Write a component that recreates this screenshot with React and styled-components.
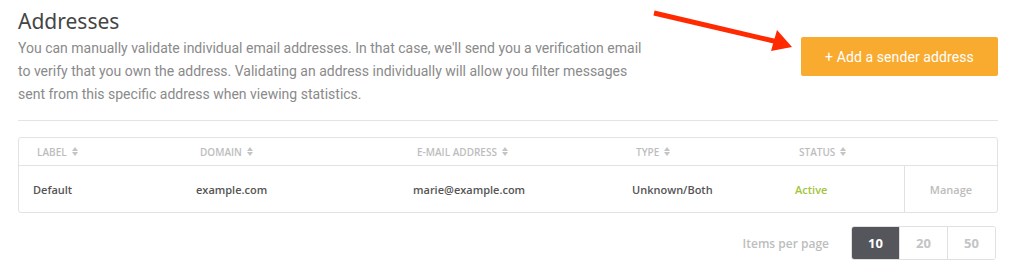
import React from 'react';
import styled, { createGlobalStyle } from 'styled-components';

const GlobalStyle = createGlobalStyle`
  html, body {
    margin: 0;
    padding: 0;
    background: #ffffff;
  }
`;

const columns = [
  { key: 'label', title: 'Label', width: 163 },
  { key: 'domain', title: 'Domain', width: 217 },
  { key: 'email', title: 'E-mail address', width: 219 },
  { key: 'type', title: 'Type', width: 163 },
  { key: 'status', title: 'Status', width: 123 },
];

const rows = [
  { label: 'Default', domain: 'example.com', email: 'marie@example.com', type: 'Unknown/Both', status: 'Active' },
];

const gridTemplate = columns.map((c) => `${c.width}px`).join(' ') + ' 1fr';

const SortIcon = () => (
  <svg width="6" height="9" viewBox="0 0 6 9">
    <path d="M3 0 L6 4 H0 Z" fill="#c4c4c4" />
    <path d="M3 9 L6 5 H0 Z" fill="#c4c4c4" />
  </svg>
);

const App = () => {
  return (
    <>
      <GlobalStyle />
      <Page>
        <Arrow width="160" height="50" viewBox="0 0 160 50">
          <line x1="2" y1="8" x2="126" y2="37" stroke="#ff2a00" strokeWidth="5" strokeLinecap="butt" />
          <path d="M140 42 L119 46 L125 25 Z" fill="#ff2a00" />
        </Arrow>
        <Header>
          <Intro>
            <Title>Addresses</Title>
            <Description>
              You can manually validate individual email addresses. In that case, we'll send you a verification email
              to verify that you own the address. Validating an address individually will allow you filter messages
              sent from this specific address when viewing statistics.
            </Description>
          </Intro>
          <AddButton>+ Add a sender address</AddButton>
        </Header>
        <Divider />
        <Table>
          <HeadRow>
            {columns.map((c) => (
              <HeadCell key={c.key}>
                {c.title} <SortIcon />
              </HeadCell>
            ))}
            <HeadCell />
          </HeadRow>
          {rows.map((r) => (
            <BodyRow key={r.email}>
              {columns.map((c) => (
                <BodyCell key={c.key} $status={c.key === 'status'}>
                  {r[c.key]}
                </BodyCell>
              ))}
              <ManageCell>Manage</ManageCell>
            </BodyRow>
          ))}
        </Table>
        <Footer>
          <PerPageLabel>Items per page</PerPageLabel>
          <PageGroup>
            {[10, 20, 50].map((n) => (
              <PageButton key={n} $active={n === 10}>
                {n}
              </PageButton>
            ))}
          </PageGroup>
        </Footer>
      </Page>
    </>
  );
};

export default App;

const Page = styled.div`
  position: relative;
  width: 980px;
  padding: 7px 13px 0 18px;
  font-family: Roboto, 'Liberation Sans', sans-serif;
`;

const Arrow = styled.svg`
  position: absolute;
  left: 652px;
  top: 5px;
`;

const Header = styled.div`
  display: flex;
  justify-content: space-between;
  align-items: flex-start;
`;

const Intro = styled.div`
  display: flex;
  flex-direction: column;
`;

const Title = styled.h1`
  margin: 0;
  font-family: 'Noto Sans', 'Open Sans', sans-serif;
  font-weight: 400;
  font-size: 21px;
  line-height: 28px;
  color: #454545;
`;

const Description = styled.p`
  margin: 2px 0 0;
  width: 630px;
  font-size: 14px;
  line-height: 23px;
  color: #8a8a8a;
`;

const AddButton = styled.button`
  margin-top: 30px;
  width: 197px;
  height: 39px;
  padding-left: 6px;
  border: none;
  border-radius: 2px;
  background: #f9ab2f;
  color: #ffffff;
  font-family: Roboto, 'Liberation Sans', sans-serif;
  font-size: 14px;
  letter-spacing: 0.1px;
  cursor: pointer;
`;

const Divider = styled.hr`
  margin: 14px 0 0;
  border: none;
  border-top: 1px solid #e4e4e4;
`;

const Table = styled.div`
  margin-top: 16px;
  border: 1px solid #e2e2e2;
  border-radius: 3px;
  font-family: 'Open Sans', 'Noto Sans', sans-serif;
`;

const HeadRow = styled.div`
  display: grid;
  grid-template-columns: ${gridTemplate};
  height: 27px;
  border-bottom: 1px solid #e2e2e2;
`;

const HeadCell = styled.div`
  display: flex;
  align-items: center;
  gap: 5px;
  padding-left: 18px;
  font-size: 10px;
  font-weight: 600;
  text-transform: uppercase;
  color: #bdbdbd;
`;

const BodyRow = styled.div`
  display: grid;
  grid-template-columns: ${gridTemplate};
  height: 46px;
`;

const BodyCell = styled.div`
  display: flex;
  align-items: center;
  padding-left: 14px;
  font-size: 11px;
  font-weight: 600;
  color: ${(p) => (p.$status ? '#a3c43c' : '#555555')};
`;

const ManageCell = styled.div`
  display: flex;
  align-items: center;
  justify-content: center;
  border-left: 1px solid #e2e2e2;
  font-size: 11px;
  font-weight: 600;
  color: #bcbcbc;
`;

const Footer = styled.div`
  display: flex;
  justify-content: flex-end;
  align-items: center;
  gap: 22px;
  margin-top: 13px;
  padding-right: 2px;
`;

const PerPageLabel = styled.span`
  font-family: 'Open Sans', 'Noto Sans', sans-serif;
  font-size: 12px;
  font-weight: 600;
  color: #bdbdbd;
`;

const PageGroup = styled.div`
  display: flex;
  border: 1px solid #e0e0e0;
  border-radius: 3px;
  overflow: hidden;
`;

const PageButton = styled.div`
  width: 47px;
  height: 32px;
  display: flex;
  align-items: center;
  justify-content: center;
  font-family: 'Open Sans', 'Noto Sans', sans-serif;
  font-size: 13px;
  font-weight: 700;
  background: ${(p) => (p.$active ? '#55565b' : '#ffffff')};
  color: ${(p) => (p.$active ? '#ffffff' : '#c4c4c4')};
  & + & {
    border-left: 1px solid #e0e0e0;
  }
`;
